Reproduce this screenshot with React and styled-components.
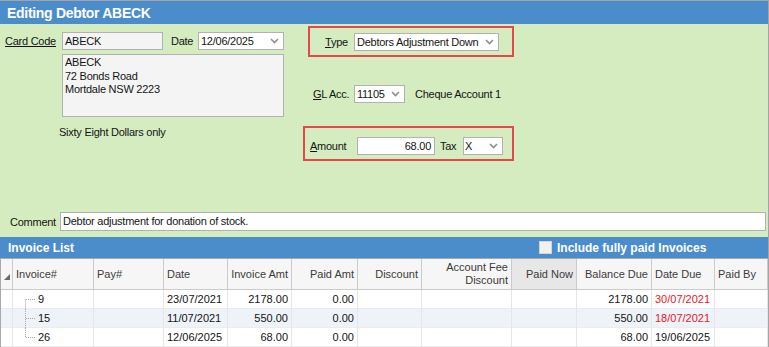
import styled, { createGlobalStyle } from 'styled-components';

const GlobalStyle = createGlobalStyle`
  *, *::before, *::after { box-sizing: border-box; }
  html, body { margin: 0; padding: 0; background: #fff; }
  body {
    font-family: 'Liberation Sans', Arial, sans-serif;
    font-size: 11px;
    color: #141414;
  }
`;

const Window = styled.div`
  width: 769px;
  height: 347px;
  border-top: 1px solid #a4a4a4;
  border-right: 1px solid #a4a4a4;
  display: flex;
  flex-direction: column;
  overflow: hidden;
`;

const TitleBar = styled.div`
  height: 23px;
  flex: none;
  background: #4b8dca;
  color: #fff;
  font-weight: bold;
  font-size: 14px;
  letter-spacing: -0.3px;
  padding-left: 7px;
  display: flex;
  align-items: center;
`;

const FormArea = styled.div`
  height: 213px;
  flex: none;
  background: #d5ecc0;
  display: flex;
  flex-direction: column;
  letter-spacing: -0.25px;
`;

const TopSection = styled.div`
  display: flex;
  align-items: flex-start;
`;

const LeftCol = styled.div`
  width: 303px;
  padding: 7px 0 0 5px;
  display: flex;
  flex-direction: column;
`;

const RightCol = styled.div`
  width: 211px;
  padding-top: 2px;
  display: flex;
  flex-direction: column;
`;

const Row = styled.div`
  display: flex;
  align-items: center;
  height: 19px;
  margin-top: ${p => p.$mt || 0}px;
  margin-left: ${p => p.$ml || 0}px;
`;

const Label = styled.span`
  width: ${p => (p.$w ? `${p.$w}px` : 'auto')};
  flex: none;
  white-space: nowrap;
  text-decoration: ${p => (p.$link ? 'underline' : 'none')};
  margin-left: ${p => p.$ml || 0}px;
`;

const Key = styled.span`
  text-decoration: underline;
`;

const Field = styled.div`
  width: ${p => (p.$w ? `${p.$w}px` : 'auto')};
  flex: ${p => (p.$w ? 'none' : '1')};
  height: ${p => p.$h || 18}px;
  background: ${p => (p.$gray ? '#f4f4f4' : '#fff')};
  border: 1px solid #b2b2b2;
  padding: 0 3px 0 2px;
  line-height: ${p => (p.$h || 18) - 2}px;
  text-align: ${p => p.$align || 'left'};
  white-space: nowrap;
  overflow: hidden;
  margin-right: ${p => p.$mr || 0}px;
`;

const SelectBox = styled.div`
  width: ${p => p.$w}px;
  flex: none;
  height: 18px;
  background: #fff;
  border: 1px solid #b2b2b2;
  display: flex;
  align-items: center;
  justify-content: space-between;
  padding: 0 4px 0 ${p => p.$pl ?? 2}px;
  white-space: nowrap;
`;

const AddressBox = styled.div`
  margin: 4px 0 0 57px;
  width: 222px;
  height: 63px;
  background: #f4f4f4;
  border: 1px solid #b2b2b2;
  padding: 1px 2px;
  line-height: 13.5px;
`;

const WordsLine = styled.div`
  margin: 8px 0 0 54px;
  line-height: 14px;
`;

const RedBox = styled.div`
  margin-top: ${p => p.$mt || 0}px;
  margin-left: ${p => p.$ml || 0}px;
  width: ${p => p.$w}px;
  height: ${p => p.$h}px;
  border: 2px solid #e8474a;
  display: flex;
  align-items: center;
  padding: ${p => p.$pad};
`;

const CommentRow = styled.div`
  margin-top: auto;
  padding: 0 2px 6px 10px;
  display: flex;
  align-items: center;
`;

const InvoiceBar = styled.div`
  height: 21px;
  flex: none;
  background: #4b8dca;
  color: #fff;
  font-weight: bold;
  font-size: 12px;
  display: flex;
  align-items: center;
  padding-left: 8px;
`;

const BarTitle = styled.span`
  width: 531px;
`;

const CheckGroup = styled.label`
  display: flex;
  align-items: center;
  gap: 5px;
`;

const CheckBox = styled.span`
  width: 13px;
  height: 13px;
  background: #f1f1f1;
  border: 1px solid #d4d4d4;
`;

const Table = styled.div`
  border-top: 1px solid #a9a9a9;
  border-left: 1px solid #a9a9a9;
  display: grid;
  grid-template-columns: 12px 81px 70px 64px 64px 66px 64px 90px 65px 75px 63px 1fr;
`;

const HeadCell = styled.div`
  height: 31px;
  background: ${p => (p.$shade ? '#e7e7e7' : '#f6f6f6')};
  border-right: 1px solid #cbcbcb;
  border-bottom: 1px solid #cbcbcb;
  color: #3b3b3b;
  display: flex;
  align-items: center;
  justify-content: ${p => (p.$right ? 'flex-end' : 'flex-start')};
  text-align: ${p => (p.$right ? 'right' : 'left')};
  padding: 0 3px;
  line-height: 13px;
  white-space: nowrap;
`;

const IndicatorCell = styled(HeadCell)`
  padding: 6px 0 0 3px;
`;

const Cell = styled.div`
  height: 19px;
  background: ${p => (p.$alt ? '#eef3f9' : '#fff')};
  border-right: 1px solid #e6e6e6;
  border-bottom: 1px solid #ececec;
  display: flex;
  align-items: center;
  justify-content: ${p => (p.$right ? 'flex-end' : 'flex-start')};
  padding: ${p => (p.$tree ? '0' : '0 3px')};
  color: ${p => (p.$red ? '#f0141e' : '#141414')};
  white-space: nowrap;
`;

const Chevron = () => (
  <svg width="9" height="6" viewBox="0 0 9 6">
    <path d="M1 1 L4.5 4.5 L8 1" fill="none" stroke="#8d8d8d" strokeWidth="1.6" />
  </svg>
);

const TreeLines = ({ pos }) => {
  const y1 = pos === 'first' ? 9.5 : 0;
  const y2 = pos === 'last' ? 9.5 : 19;
  return (
    <svg width="25" height="19" viewBox="0 0 25 19">
      <g stroke="#a6a6a6" strokeWidth="1" strokeDasharray="1 1" fill="none">
        <path d={`M12.5 ${y1} V${y2}`} />
        <path d="M13 9.5 H23" />
      </g>
    </svg>
  );
};

const columns = [
  { key: 'inv', title: 'Invoice#' },
  { key: 'pay', title: 'Pay#' },
  { key: 'date', title: 'Date' },
  { key: 'amt', title: 'Invoice Amt', right: true },
  { key: 'paid', title: 'Paid Amt', right: true },
  { key: 'disc', title: 'Discount', right: true },
  { key: 'fee', title: <>Account Fee<br />Discount</>, right: true },
  { key: 'now', title: 'Paid Now', right: true, shade: true },
  { key: 'bal', title: 'Balance Due', right: true },
  { key: 'due', title: 'Date Due' },
  { key: 'by', title: 'Paid By' },
];

const invoices = [
  { inv: '9', date: '23/07/2021', amt: '2178.00', paid: '0.00', bal: '2178.00', due: '30/07/2021', overdue: true },
  { inv: '15', date: '11/07/2021', amt: '550.00', paid: '0.00', bal: '550.00', due: '18/07/2021', overdue: true },
  { inv: '26', date: '12/06/2025', amt: '68.00', paid: '0.00', bal: '68.00', due: '19/06/2025' },
];

export default function App() {
  return (
    <>
      <GlobalStyle />
      <Window>
        <TitleBar>Editing Debtor ABECK</TitleBar>
        <FormArea>
          <TopSection>
            <LeftCol>
              <Row>
                <Label $w={57} $link>Card Code</Label>
                <Field $w={101} $gray $mr={8}>ABECK</Field>
                <Label $w={27}>Date</Label>
                <SelectBox $w={86}>
                  <span>12/06/2025</span>
                  <Chevron />
                </SelectBox>
              </Row>
              <AddressBox>
                ABECK<br />
                72 Bonds Road<br />
                Mortdale NSW 2223
              </AddressBox>
              <WordsLine>Sixty Eight Dollars only</WordsLine>
            </LeftCol>
            <RightCol>
              <RedBox $ml={5} $w={206} $h={31} $pad="0 0 0 15px">
                <Label $w={29}><Key>T</Key>ype</Label>
                <SelectBox $w={145}>
                  <span>Debtors Adjustment Down</span>
                  <Chevron />
                </SelectBox>
              </RedBox>
              <Row $mt={27} $ml={10}>
                <Label $w={41}><Key>G</Key>L Acc.</Label>
                <SelectBox $w={51}>
                  <span>11105</span>
                  <Chevron />
                </SelectBox>
                <Label $ml={10}>Cheque Account 1</Label>
              </Row>
              <RedBox $mt={23} $w={211} $h={35} $pad="5px 0 0 5px">
                <Label $w={47}><Key>A</Key>mount</Label>
                <Field $w={78} $align="right" $mr={5}>68.00</Field>
                <Label $w={23}>Tax</Label>
                <SelectBox $w={40} $pl={1}>
                  <span>X</span>
                  <Chevron />
                </SelectBox>
              </RedBox>
            </RightCol>
          </TopSection>
          <CommentRow>
            <Label $w={50}>Comment</Label>
            <Field $h={19}>Debtor adjustment for donation of stock.</Field>
          </CommentRow>
        </FormArea>
        <InvoiceBar>
          <BarTitle>Invoice List</BarTitle>
          <CheckGroup>
            <CheckBox />
            Include fully paid Invoices
          </CheckGroup>
        </InvoiceBar>
        <Table>
          <IndicatorCell>
            <svg width="6" height="6" viewBox="0 0 6 6">
              <path d="M0 6 L6 6 L6 0 Z" fill="#6a6a6a" />
            </svg>
          </IndicatorCell>
          {columns.map(c => (
            <HeadCell key={c.key} $right={c.right} $shade={c.shade}>{c.title}</HeadCell>
          ))}
          {invoices.map((r, i) => {
            const alt = i % 2 === 1;
            const pos = i === 0 ? 'first' : i === invoices.length - 1 ? 'last' : 'mid';
            return [
              <Cell key={`ind${i}`} $alt={alt} $tree />,
              <Cell key={`inv${i}`} $alt={alt} $tree>
                <TreeLines pos={pos} />
                {r.inv}
              </Cell>,
              <Cell key={`pay${i}`} $alt={alt} />,
              <Cell key={`date${i}`} $alt={alt}>{r.date}</Cell>,
              <Cell key={`amt${i}`} $alt={alt} $right>{r.amt}</Cell>,
              <Cell key={`paid${i}`} $alt={alt} $right>{r.paid}</Cell>,
              <Cell key={`disc${i}`} $alt={alt} />,
              <Cell key={`fee${i}`} $alt={alt} />,
              <Cell key={`now${i}`} $alt={alt} />,
              <Cell key={`bal${i}`} $alt={alt} $right>{r.bal}</Cell>,
              <Cell key={`due${i}`} $alt={alt} $red={r.overdue}>{r.due}</Cell>,
              <Cell key={`by${i}`} $alt={alt} />,
            ];
          })}
        </Table>
      </Window>
    </>
  );
}
